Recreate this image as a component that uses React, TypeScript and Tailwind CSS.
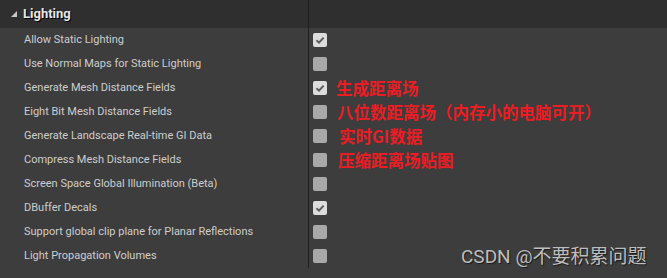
import React from "react";

type Row = { label: string; checked: boolean; note?: string; noteOffset?: string };

const rows: Row[] = [
  { label: "Allow Static Lighting", checked: true },
  { label: "Use Normal Maps for Static Lighting", checked: false },
  { label: "Generate Mesh Distance Fields", checked: true, note: "生成距离场", noteOffset: "ml-[9px]" },
  { label: "Eight Bit Mesh Distance Fields", checked: false, note: "八位数距离场（内存小的电脑可开）", noteOffset: "ml-[10px]" },
  { label: "Generate Landscape Real-time GI Data", checked: false, note: "实时GI数据", noteOffset: "ml-[12px]" },
  { label: "Compress Mesh Distance Fields", checked: false, note: "压缩距离场贴图", noteOffset: "ml-[11px]" },
  { label: "Screen Space Global Illumination (Beta)", checked: false },
  { label: "DBuffer Decals", checked: true },
  { label: "Support global clip plane for Planar Reflections", checked: false },
  { label: "Light Propagation Volumes", checked: false },
];

function CheckBox({ checked }: { checked: boolean }) {
  return (
    <div
      className={
        checked
          ? "flex h-[14px] w-[14px] shrink-0 items-center justify-center rounded-[2px] bg-[#dcdcdc]"
          : "h-[14px] w-[14px] shrink-0 rounded-[2px] bg-[#a9a9a9]"
      }
    >
      {checked ? (
        <svg width="10" height="10" viewBox="0 0 10 10">
          <path d="M1.5 5.2 L4 7.6 L8.6 2.6" fill="none" stroke="#5c5c5c" strokeWidth="2" />
        </svg>
      ) : null}
    </div>
  );
}

export default function App() {
  return (
    <div
      className="relative h-[278px] w-[667px] overflow-hidden bg-[#3d3d3d]"
      style={{ fontFamily: "Roboto, 'Noto Sans CJK SC', sans-serif" }}
    >
      {/* category header */}
      <div className="flex h-[28px] bg-[#2f2f2f]">
        <div className="flex w-[308px] items-center">
          <svg className="ml-[11px]" width="6" height="6" viewBox="0 0 6 6">
            <polygon points="6,0 6,6 0,6" fill="#c8c8c8" />
          </svg>
          <span className="ml-[6px] text-[13px] font-bold text-[#e6e6e6] [text-shadow:1px_1px_0_#000]">
            Lighting
          </span>
        </div>
        <div className="w-px bg-[#1f1f1f]" />
      </div>

      {rows.map((r) => (
        <div key={r.label} className="flex h-[24px]">
          <div className="flex w-[308px] items-center pl-[24px] text-[11px] text-[#cdcdcd]">
            {r.label}
          </div>
          <div className="w-px bg-[#1f1f1f]" />
          <div className="flex items-center pl-[4px]">
            <CheckBox checked={r.checked} />
            {r.note ? (
              <span
                className={`${r.noteOffset} text-[16.5px] font-bold leading-none text-[#ec1c24]`}
                style={{ fontFamily: "'Noto Sans CJK SC', sans-serif" }}
              >
                {r.note}
              </span>
            ) : null}
          </div>
        </div>
      ))}

      {/* watermark */}
      <div
        className="absolute left-[461px] top-[245px] text-[19px] leading-[24px] text-[#bdbdbd] [text-shadow:1px_1px_1px_#1a1a1a]"
        style={{ fontFamily: "Roboto, 'Noto Sans CJK SC', sans-serif" }}
      >
        CSDN @不要积累问题
      </div>
    </div>
  );
}
